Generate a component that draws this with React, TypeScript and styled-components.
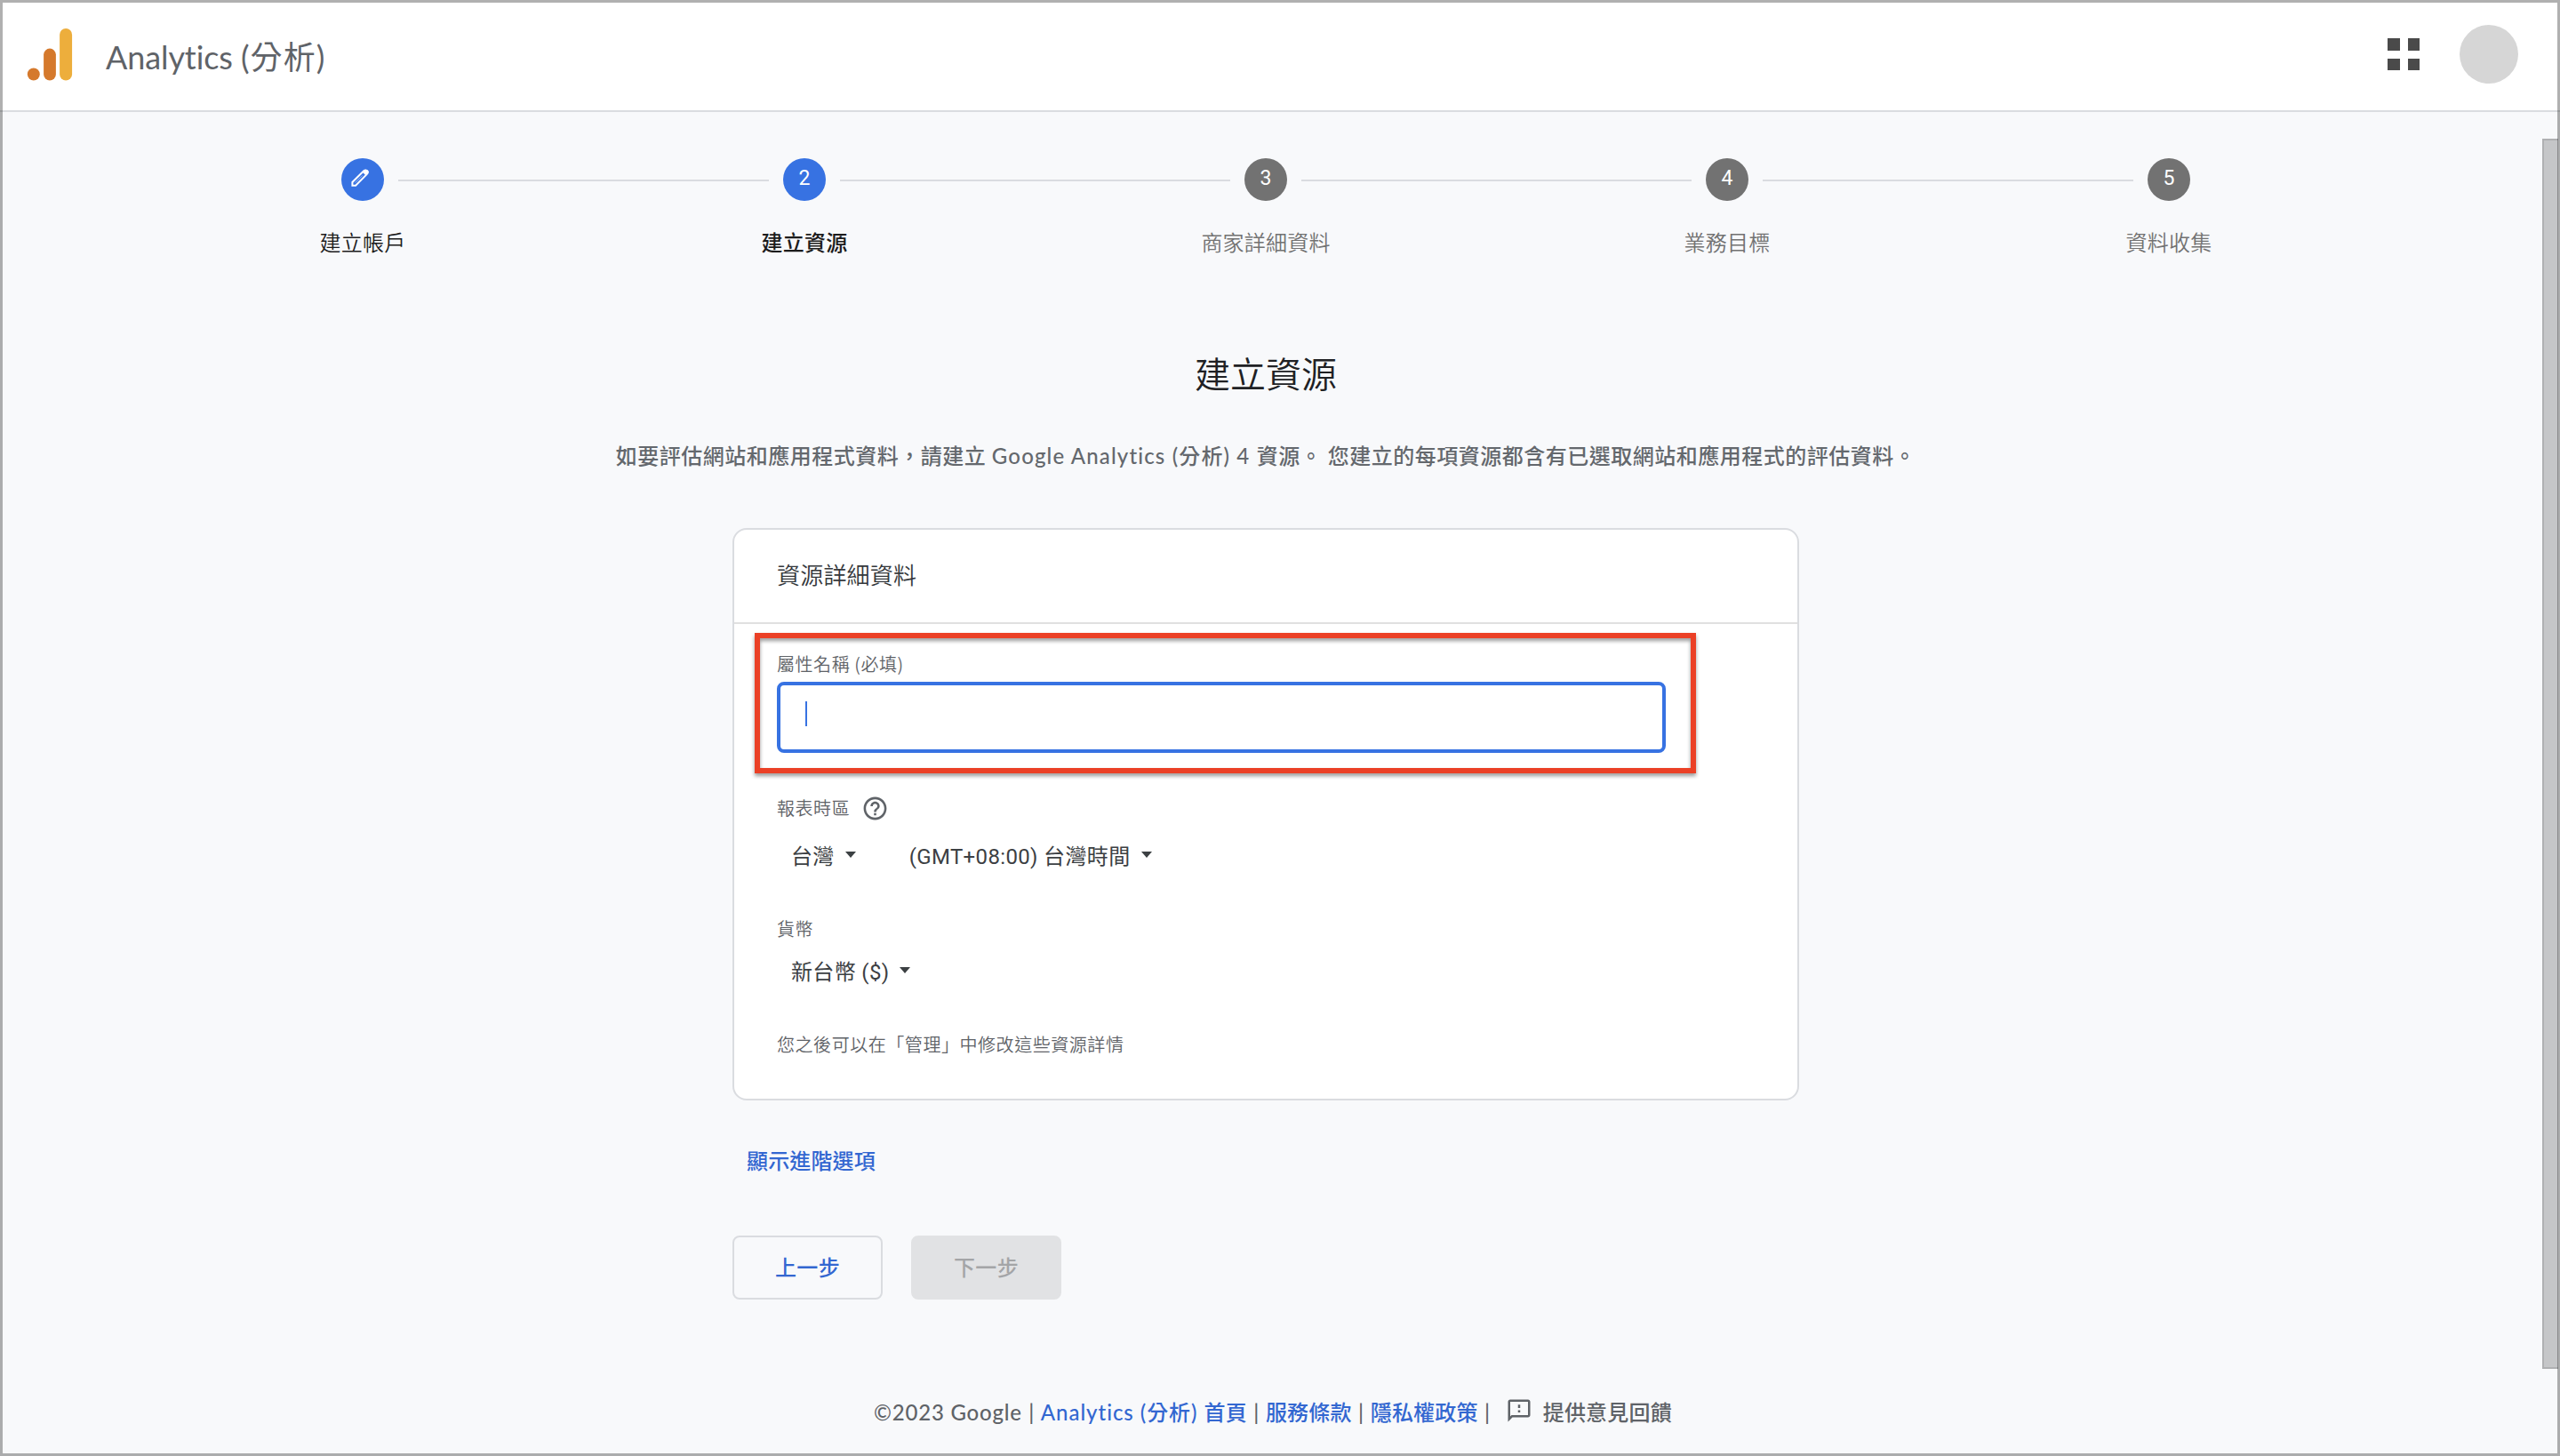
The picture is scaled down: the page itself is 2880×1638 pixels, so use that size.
import React from "react";
import styled, { createGlobalStyle, css } from "styled-components";

const CJK = `"Noto Sans CJK TC", sans-serif`;
const PRODUCT = `Lato, "Noto Sans CJK TC", sans-serif`;
const BODY = `Roboto, "Noto Sans CJK TC", sans-serif`;

const GlobalStyle = createGlobalStyle`
  *, *::before, *::after { box-sizing: border-box; }
  body { margin: 0; background: #f8f9fb; font-variant-ligatures: none; }
`;

const Page = styled.div`
  position: relative;
  width: 2880px;
  height: 1638px;
  overflow: hidden;
  background: #f8f9fb;
  color: #5f6368;
`;

const WindowFrame = styled.div`
  position: absolute;
  inset: 0;
  border: 3px solid rgba(0, 0, 0, 0.31);
  pointer-events: none;
`;

const Scrollbar = styled.div`
  position: absolute;
  top: 156px;
  right: 2px;
  width: 18px;
  height: 1384px;
  background: #c5c6c8;
  border: solid #afb0b2;
  border-width: 2px 0 2px 2px;
`;

const Header = styled.header`
  display: flex;
  align-items: center;
  height: 126px;
  padding: 0 47px 0 30px;
  background: #fff;
  border-bottom: 2px solid #dadce0;
`;

const ProductName = styled.h1`
  margin: 3px auto 0 37px;
  font: 400 36px/48px ${PRODUCT};
  letter-spacing: -0.1px;
  color: #5f6368;
  white-space: nowrap;
`;

const AppsGrid = styled.div`
  display: grid;
  grid-template-columns: 13.5px 13.5px;
  gap: 9px;
  margin-right: 45px;
  margin-bottom: 2px;
  span { height: 13.5px; background: #4a4a4a; }
`;

const Avatar = styled.div`
  width: 66px;
  height: 66px;
  margin-bottom: 2px;
  border-radius: 50%;
  background: #d6d6d6;
`;

const Main = styled.main`
  display: flex;
  flex-direction: column;
  align-items: center;
  width: 2848px;
`;

const Stepper = styled.div`
  display: flex;
  gap: 16px;
  width: 2080px;
  height: 112px;
  margin-top: 52px;
`;

const StepItem = styled.div`
  display: flex;
  flex-direction: column;
  align-items: center;
  flex: 0 0 48px;
  width: 48px;
`;

const StepCircle = styled.div<{ $on?: boolean }>`
  display: flex;
  align-items: center;
  justify-content: center;
  width: 48px;
  height: 48px;
  padding-bottom: 3px;
  border-radius: 50%;
  background: ${(p) => (p.$on ? "#3772e2" : "#727272")};
  color: #fff;
  font: 400 23px/28px ${BODY};
  svg { margin: 0 6px 2px 0; }
`;

const StepLabel = styled.div<{ $state: "done" | "current" | "next" }>`
  margin-top: 28px;
  font: ${(p) => (p.$state === "current" ? 500 : 350)} 24px/36px ${CJK};
  letter-spacing: 0.2px;
  color: ${(p) => (p.$state === "next" ? "#727272" : "#1c1c1c")};
  white-space: nowrap;
`;

const StepLine = styled.div<{ $w: number }>`
  flex: ${(p) => p.$w} 1 0;
  height: 2px;
  margin-top: 24px;
  background: #dadce0;
`;

const Heading = styled.h2`
  margin: 99px 0 0;
  font: 350 40px/60px ${CJK};
  color: #202124;
`;

const Intro = styled.p`
  margin: 46px 0 0;
  font: 500 24px/36px ${PRODUCT};
  letter-spacing: 0.5px;
  color: #64686d;
  white-space: nowrap;
`;

const Latin = styled.span<{ $ls?: number }>`
  letter-spacing: ${(p) => p.$ls ?? 1.15}px;
`;

const Column = styled.div`
  display: flex;
  flex-direction: column;
  align-items: flex-start;
  width: 1200px;
`;

const Card = styled.section`
  width: 100%;
  height: 644px;
  margin-top: 63px;
  border: 2px solid #dadce0;
  border-radius: 16px;
  background: #fff;
`;

const CardTitle = styled.h3`
  display: flex;
  align-items: center;
  height: 106px;
  margin: 0;
  padding: 0 48px 5px;
  border-bottom: 2px solid #e0e0e0;
  font: 350 26px/36px ${CJK};
  letter-spacing: 0.2px;
  color: #35383c;
`;

const CardBody = styled.div`
  display: flex;
  flex-direction: column;
  align-items: flex-start;
  padding: 33px 48px 49px;
`;

const Field = styled.div`
  position: relative;
  width: 1000px;
`;

const Label = styled.div<{ $top?: number }>`
  margin-top: ${(p) => p.$top ?? 0}px;
  font: 350 20px/24px ${CJK};
  letter-spacing: 0.55px;
  color: #5f6368;
  white-space: nowrap;
`;

const TextInput = styled.div`
  display: flex;
  height: 80px;
  margin-top: 8px;
  padding: 18px 28px;
  border: 4px solid #3772e2;
  border-radius: 8px;
`;

const Caret = styled.span`
  width: 2px;
  height: 28px;
  background: #3772e2;
`;

const Highlight = styled.div`
  position: absolute;
  left: -25px;
  top: -23px;
  width: 1059px;
  height: 158px;
  border: 6px solid #eb4026;
  filter: drop-shadow(0 3px 2px rgba(0, 0, 0, 0.4));
`;

const LabelRow = styled.div`
  display: flex;
  align-items: center;
  gap: 13px;
  height: 30px;
  margin-top: 47px;
  svg { margin-top: 1px; }
  ${Label} { padding-bottom: 1px; }
`;

const SelectRow = styled.div<{ $top: number }>`
  display: flex;
  gap: 60px;
  height: 36px;
  margin-top: ${(p) => p.$top}px;
  padding-left: 16px;
`;

const Select = styled.div`
  display: flex;
  align-items: center;
  gap: 12px;
  font: 400 24px/36px ${BODY};
  letter-spacing: 0.35px;
  color: #3c4043;
  white-space: nowrap;
  &::after {
    content: "";
    margin-bottom: 5px;
    border: 6px solid transparent;
    border-top: 7px solid #3c4043;
    border-bottom: 0;
  }
`;

const AdvancedLink = styled.a`
  margin: 49px 0 0 16px;
  font: 500 24px/36px ${CJK};
  letter-spacing: 0.15px;
  color: #3367d1;
`;

const Actions = styled.div`
  display: flex;
  gap: 32px;
  margin-top: 67px;
`;

const Button = styled.button<{ $disabled?: boolean }>`
  display: flex;
  align-items: center;
  justify-content: center;
  width: 169px;
  height: 72px;
  padding: 0 0 3px;
  border: 2px solid #dadce0;
  border-radius: 8px;
  background: transparent;
  font: 500 24px/36px ${CJK};
  letter-spacing: 0.3px;
  color: #3367d1;
  ${(p) =>
    p.$disabled &&
    css`
      border-color: #e1e2e4;
      background: #e1e2e4;
      color: #a4a5a7;
    `}
`;

const Footer = styled.footer`
  display: flex;
  align-self: flex-start;
  height: 36px;
  margin: 109px 0 0 983px;
  font: 500 24px/36px ${PRODUCT};
  letter-spacing: 0.2px;
  color: #5f6368;
  white-space: nowrap;
  a { color: #3367d1; }
`;

const Bar = styled.span`
  width: 21px;
  text-align: center;
`;

const Feedback = styled.span`
  display: flex;
  gap: 12px;
  margin-left: 10px;
  svg { margin-top: 1px; }
`;

const AnalyticsLogo = () => (
  <svg width="52" height="60" viewBox="0 0 52 61">
    <circle cx="7.5" cy="52.3" r="7.1" fill="#d5792c" />
    <rect x="19" y="23" width="14" height="36.5" rx="7" fill="#d5792c" />
    <rect x="37.3" y="0" width="14.2" height="59.500" rx="7.1" fill="#edae3c" />
  </svg>
);

const PencilIcon = () => (
  <svg width="20" height="20" viewBox="0 0 20 20">
    <path
      d="M1.4 18.7V15L14.2 2.2Q16.2 .6 17.9 2.3T17.8 5.9L5.1 18.7Z"
      fill="none"
      stroke="#fff"
      strokeWidth="2"
    />
    <path d="M12.6 3.5 15 1.2Q17 .1 18.8 1.6T18.9 5.2L16.6 7.4Z" fill="#fff" />
    <path d="M4.6 15.6 12.8 7.4" stroke="#fff" strokeWidth="0.5" />
  </svg>
);

const HelpIcon = () => (
  <svg width="31" height="31" viewBox="0 0 24 24" fill="#5f6368">
    <path d="M11 18h2v-2h-2v2zm1-16C6.48 2 2 6.48 2 12s4.48 10 10 10 10-4.48 10-10S17.52 2 12 2zm0 18c-4.41 0-8-3.59-8-8s3.59-8 8-8 8 3.59 8 8-3.59 8-8 8zm0-14c-2.21 0-4 1.79-4 4h2c0-1.1.9-2 2-2s2 .9 2 2c0 2-3 1.75-3 5h2c0-2.25 3-2.5 3-5 0-2.21-1.79-4-4-4z" />
  </svg>
);

const FeedbackIcon = () => (
  <svg width="30" height="30" viewBox="0 0 24 24" fill="#5f6368">
    <path d="M20 2H4c-1.1 0-1.99.9-1.99 2L2 22l4-4h14c1.1 0 2-.9 2-2V4c0-1.1-.9-2-2-2zm0 14H5.17L4 17.17V4h16v12zM11 11.500h2v2h-2zm0-5h2v3h-2z" />
  </svg>
);

type State = "done" | "current" | "next";
const steps: { label: string; state: State; line?: number }[] = [
  { label: "建立帳戶", state: "done", line: 417 },
  { label: "建立資源", state: "current", line: 439 },
  { label: "商家詳細資料", state: "next", line: 439 },
  { label: "業務目標", state: "next", line: 417 },
  { label: "資料收集", state: "next" },
];

export default function App() {
  return (
    <Page>
      <GlobalStyle />
      <Header>
        <AnalyticsLogo />
        <ProductName>
          Analytics <Latin $ls={1.1}>(分析)</Latin>
        </ProductName>
        <AppsGrid>
          <span />
          <span />
          <span />
          <span />
        </AppsGrid>
        <Avatar />
      </Header>
      <Main>
        <Stepper>
          {steps.map((s, i) => (
            <React.Fragment key={s.label}>
              <StepItem>
                <StepCircle $on={s.state !== "next"}>
                  {s.state === "done" ? <PencilIcon /> : i + 1}
                </StepCircle>
                <StepLabel $state={s.state}>{s.label}</StepLabel>
              </StepItem>
              {s.line && <StepLine $w={s.line} />}
            </React.Fragment>
          ))}
        </Stepper>
        <Heading>建立資源</Heading>
        <Intro>
          如要評估網站和應用程式資料，請建立 <Latin>Google Analytics (分析) 4 </Latin>
          資源。 您建立的每項資源都含有已選取網站和應用程式的評估資料。
        </Intro>
        <Column>
          <Card>
            <CardTitle>資源詳細資料</CardTitle>
            <CardBody>
              <Field>
                <Label>屬性名稱 (必填)</Label>
                <TextInput>
                  <Caret />
                </TextInput>
                <Highlight />
              </Field>
              <LabelRow>
                <Label>報表時區</Label>
                <HelpIcon />
              </LabelRow>
              <SelectRow $top={22}>
                <Select>台灣</Select>
                <Select>(GMT+08:00) 台灣時間</Select>
              </SelectRow>
              <Label $top={51}>貨幣</Label>
              <SelectRow $top={19}>
                <Select>新台幣 ($)</Select>
              </SelectRow>
              <Label $top={51}>您之後可以在「管理」中修改這些資源詳情</Label>
            </CardBody>
          </Card>
          <AdvancedLink>顯示進階選項</AdvancedLink>
          <Actions>
            <Button>上一步</Button>
            <Button $disabled>下一步</Button>
          </Actions>
        </Column>
        <Footer>
          <Latin $ls={0.8}>©2023 Google</Latin>
          <Bar>|</Bar>
          <a>
            <Latin $ls={0.95}>Analytics (分析) </Latin>首頁
          </a>
          <Bar>|</Bar>
          <a>服務條款</a>
          <Bar>|</Bar>
          <a>隱私權政策</a>
          <Bar>|</Bar>
          <Feedback>
            <FeedbackIcon />
            提供意見回饋
          </Feedback>
        </Footer>
      </Main>
      <Scrollbar />
      <WindowFrame />
    </Page>
  );
}
